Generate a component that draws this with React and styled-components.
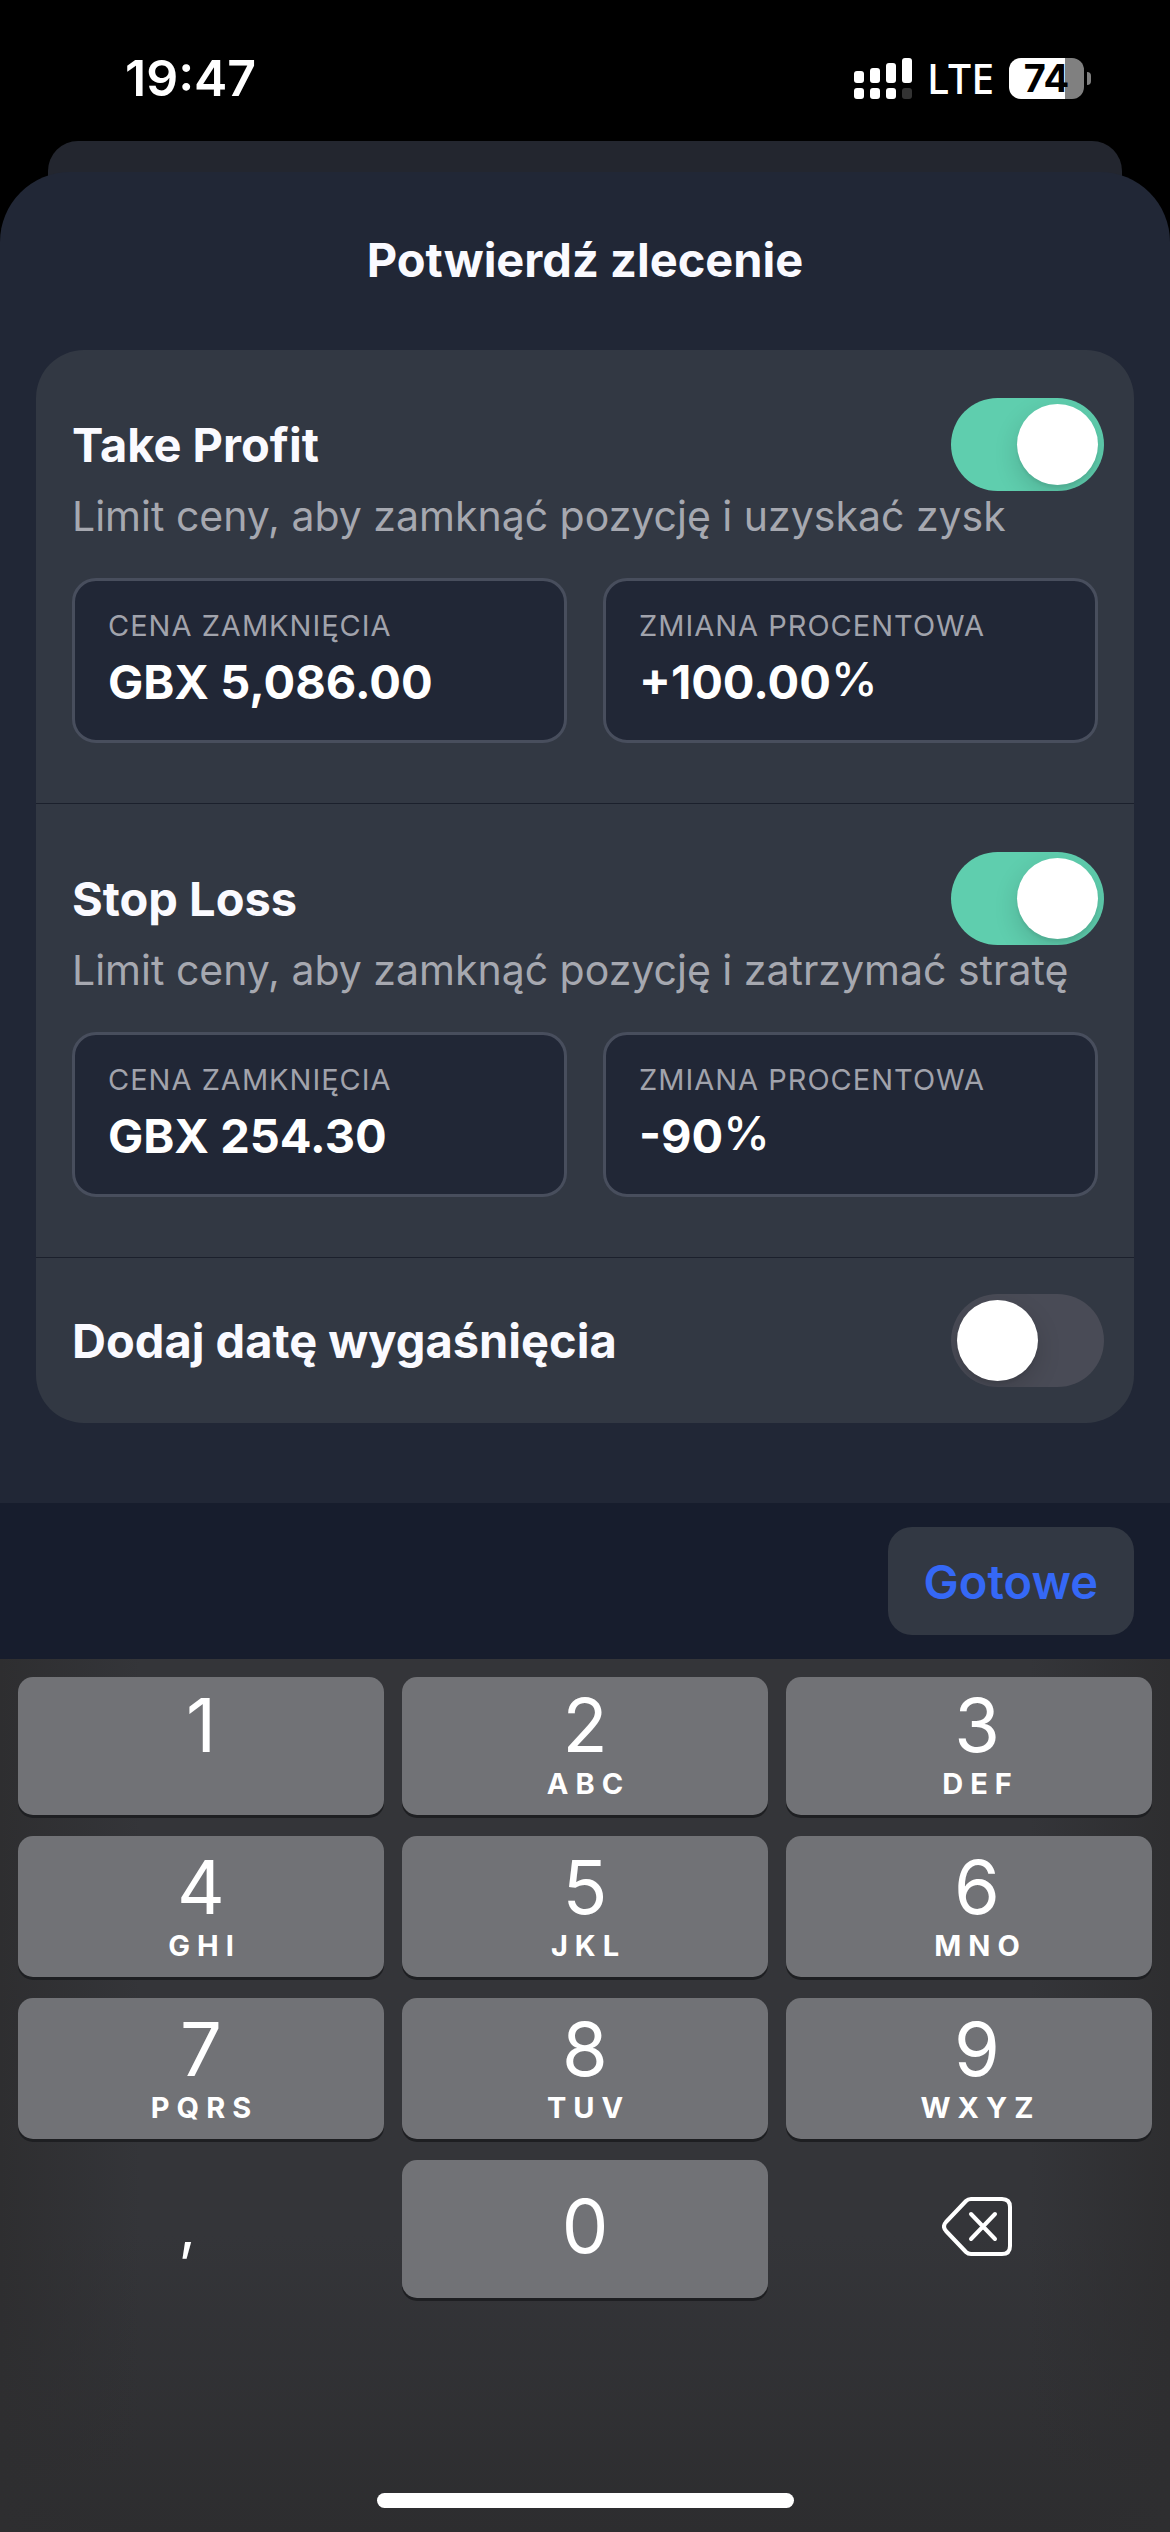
import React, { useState } from "react";
import styled, { createGlobalStyle } from "styled-components";

const GlobalStyle = createGlobalStyle`
  * { box-sizing: border-box; }
  body { margin: 0; background: #000; }
  button, input { font: inherit; color: inherit; border: 0; margin: 0; padding: 0; background: none; }
`;

const Screen = styled.div`
  min-height: 100vh;
  display: flex;
  flex-direction: column;
  background: #000;
  color: #fafaff;
  font-family: Inter, "Noto Sans", sans-serif;
`;

const StatusBar = styled.header`
  height: 141px;
  padding: 15px 79px 0 125px;
  display: flex;
  align-items: center;
  justify-content: space-between;
  color: #fff;
`;

const Clock = styled.time`
  font-size: 50px;
  font-weight: 600;
  line-height: 60px;
`;

const StatusIcons = styled.div`
  display: flex;
  align-items: center;
  gap: 15px;
`;

const Network = styled.span`
  font-family: "Noto Sans", sans-serif;
  font-size: 41px;
  font-weight: 500;
  line-height: 48px;
`;

const BatteryShell = styled.div`
  display: flex;
  align-items: center;
  gap: 3px;
`;

const BatteryBody = styled.div`
  width: 75px;
  height: 41px;
  border-radius: 12px;
  background: linear-gradient(to right, #fff 75%, #808080 75%);
  color: #000;
  font-size: 38px;
  font-weight: 700;
  line-height: 41px;
  text-align: center;
`;

const BatteryTip = styled.div`
  width: 4px;
  height: 13px;
  border-radius: 0 6px 6px 0;
  background: #808080;
`;

const BackCard = styled.div`
  height: 80px;
  margin: 0 48px -49px;
  border-radius: 30px 30px 0 0;
  background: #23262f;
`;

const Sheet = styled.main`
  flex: 1;
  position: relative;
  padding: 58px 36px 80px;
  border-radius: 70px 70px 0 0;
  background: #212736;
`;

const SheetTitle = styled.h1`
  margin: 0 0 60px;
  font-size: 47px;
  font-weight: 700;
  line-height: 60px;
  text-align: center;
`;

const Card = styled.div`
  border-radius: 48px;
  background: #323843;
`;

const Section = styled.section`
  padding: ${(p) => (p.$compact ? "36px" : "48px 36px 60px")};
  & + & { border-top: 1px solid #1b202c; }
`;

const TitleRow = styled.div`
  display: flex;
  align-items: center;
  justify-content: space-between;
  margin-right: -6px;
`;

const SectionTitle = styled.label`
  font-size: 47px;
  font-weight: 700;
  line-height: 60px;
`;

const Switch = styled.input`
  appearance: none;
  flex: none;
  width: 153px;
  height: 93px;
  padding: 6px;
  border-radius: 47px;
  overflow: hidden;
  background: ${(p) => (p.checked ? "#5fceae" : "#494b56")};
  display: flex;
  justify-content: ${(p) => (p.checked ? "flex-end" : "flex-start")};

  &::before {
    content: "";
    width: 81px;
    height: 81px;
    border-radius: 50%;
    background: #fff;
    box-shadow: 0 9px 24px rgba(0, 0, 0, 0.15), 0 3px 3px rgba(0, 0, 0, 0.06);
  }
`;

const Description = styled.p`
  margin: 0 0 36px;
  color: #a6a8b0;
  font-size: 41px;
  line-height: 51px;
`;

const Fields = styled.div`
  display: grid;
  grid-template-columns: 1fr 1fr;
  gap: 36px;
`;

const FieldBox = styled.label`
  display: flex;
  flex-direction: column;
  min-width: 0;
  padding: 24px 33px;
  border: 3px solid #484e5d;
  border-radius: 24px;
  background: #212736;
`;

const FieldName = styled.span`
  color: #a1a3ac;
  font-size: 29px;
  line-height: 42px;
  letter-spacing: 1px;
`;

const FieldValue = styled.span`
  display: flex;
  font-size: 47px;
  font-weight: 700;
  line-height: 69px;
  color: #fff;
`;

const ValueInput = styled.input`
  field-sizing: content;
  max-width: 100%;
  height: 69px;
  outline: none;
`;

const Percent = styled.span`
  line-height: 63px;
  font-weight: 500;
`;

const AccessoryBar = styled.div`
  display: flex;
  justify-content: flex-end;
  padding: 24px 36px;
  background: #171d2d;
`;

const DoneButton = styled.button`
  height: 108px;
  padding: 0 36px;
  border-radius: 24px;
  background: #323843;
  color: #3568f6;
  font-size: 47px;
  font-weight: 600;
`;

const Keyboard = styled.div`
  display: flex;
  flex-direction: column;
  height: 873px;
  padding: 18px 18px 24px;
  background:
    linear-gradient(to right, #2e2e30, transparent 12%, transparent 88%, #2e2e30),
    linear-gradient(to bottom, #343539 66%, #2d2d2f);
`;

const Keys = styled.div`
  display: grid;
  grid-template-columns: repeat(3, 1fr);
  grid-template-rows: 138px 141px 141px 138px;
  gap: 21px 18px;
`;

const Key = styled.button`
  display: flex;
  flex-direction: column;
  align-items: center;
  justify-content: ${(p) => (p.$middle ? "center" : "flex-end")};
  padding-bottom: ${(p) => (p.$middle ? "6px" : "13px")};
  border-radius: 15px;
  color: #fff;
  background: ${(p) => (p.$plain ? "none" : "#717276")};
  box-shadow: ${(p) => (p.$plain ? "none" : "0 3px 0 #1e1f22")};

  &:nth-child(3n) { padding-left: 16px; }
`;

const Digit = styled.span`
  font-size: 74px;
  font-weight: 400;
  line-height: 82px;
`;

const Letters = styled.span`
  height: 36px;
  margin-right: -7px;
  font-size: 29px;
  font-weight: 700;
  line-height: 36px;
  letter-spacing: 7px;
`;

const Comma = styled.span`
  margin-right: 27px;
  font-size: 60px;
  line-height: 82px;
`;

const HomeIndicator = styled.div`
  width: 417px;
  height: 15px;
  margin: auto auto 0;
  border-radius: 8px;
  background: #fff;
`;

const bars = [
  { x: 0, top: 13, on: true },
  { x: 16, top: 10, on: true },
  { x: 32, top: 5, on: true },
  { x: 48, top: 0, on: false },
];

function SignalIcon() {
  return (
    <svg width="58" height="41" viewBox="0 0 58 41" fill="#fff" aria-hidden="true">
      {bars.map((b) => (
        <g key={b.x}>
          <rect x={b.x} y={b.top} width="10" height={25 - b.top} rx="3" />
          <rect x={b.x} y="30" width="10" height="11" rx="3" fill={b.on ? "#fff" : "#333"} />
        </g>
      ))}
    </svg>
  );
}

function BackspaceIcon() {
  return (
    <svg width="70" height="59" viewBox="0 0 70 59" fill="none" stroke="#fff" strokeWidth="4" strokeLinecap="round" strokeLinejoin="round" aria-hidden="true">
      <path d="M29 2H60Q68 2 68 10V49Q68 57 60 57H29Q26 57 24 55L4 34Q0 29.500 4 25L24 4Q26 2 29 2Z" />
      <path d="M29 17L53 42M53 17L29 42" />
    </svg>
  );
}

function Field({ name, initial, suffix }) {
  const [value, setValue] = useState(initial);
  return (
    <FieldBox>
      <FieldName>{name}</FieldName>
      <FieldValue>
        <ValueInput type="text" inputMode="decimal" value={value} onChange={(e) => setValue(e.target.value)} />
        {suffix && <Percent>{suffix}</Percent>}
      </FieldValue>
    </FieldBox>
  );
}

function OrderOption({ id, title, description, on, children }) {
  const [checked, setChecked] = useState(on);
  return (
    <Section $compact={!children}>
      <TitleRow>
        <SectionTitle htmlFor={id}>{title}</SectionTitle>
        <Switch id={id} type="checkbox" role="switch" checked={checked} onChange={(e) => setChecked(e.target.checked)} />
      </TitleRow>
      {description && <Description>{description}</Description>}
      {children && <Fields>{children}</Fields>}
    </Section>
  );
}

const digitKeys = [
  ["1", ""], ["2", "ABC"], ["3", "DEF"],
  ["4", "GHI"], ["5", "JKL"], ["6", "MNO"],
  ["7", "PQRS"], ["8", "TUV"], ["9", "WXYZ"],
];

export default function App() {
  return (
    <Screen>
      <GlobalStyle />
      <StatusBar>
        <Clock>19:47</Clock>
        <StatusIcons>
          <SignalIcon />
          <Network>LTE</Network>
          <BatteryShell>
            <BatteryBody>74</BatteryBody>
            <BatteryTip />
          </BatteryShell>
        </StatusIcons>
      </StatusBar>
      <BackCard />
      <Sheet>
        <SheetTitle>Potwierdź zlecenie</SheetTitle>
        <Card>
          <OrderOption id="take-profit" title="Take Profit" description="Limit ceny, aby zamknąć pozycję i uzyskać zysk" on>
            <Field name="CENA ZAMKNIĘCIA" initial="GBX 5,086.00" />
            <Field name="ZMIANA PROCENTOWA" initial="+100.00" suffix="%" />
          </OrderOption>
          <OrderOption id="stop-loss" title="Stop Loss" description="Limit ceny, aby zamknąć pozycję i zatrzymać stratę" on>
            <Field name="CENA ZAMKNIĘCIA" initial="GBX 254.30" />
            <Field name="ZMIANA PROCENTOWA" initial="-90" suffix="%" />
          </OrderOption>
          <OrderOption id="expiry" title="Dodaj datę wygaśnięcia" on={false} />
        </Card>
      </Sheet>
      <AccessoryBar>
        <DoneButton type="button">Gotowe</DoneButton>
      </AccessoryBar>
      <Keyboard>
        <Keys>
          {digitKeys.map(([digit, letters]) => (
            <Key key={digit} type="button">
              <Digit>{digit}</Digit>
              <Letters>{letters}</Letters>
            </Key>
          ))}
          <Key type="button" $plain $middle><Comma>,</Comma></Key>
          <Key type="button" $middle><Digit>0</Digit></Key>
          <Key type="button" $plain $middle aria-label="Usuń"><BackspaceIcon /></Key>
        </Keys>
        <HomeIndicator />
      </Keyboard>
    </Screen>
  );
}
